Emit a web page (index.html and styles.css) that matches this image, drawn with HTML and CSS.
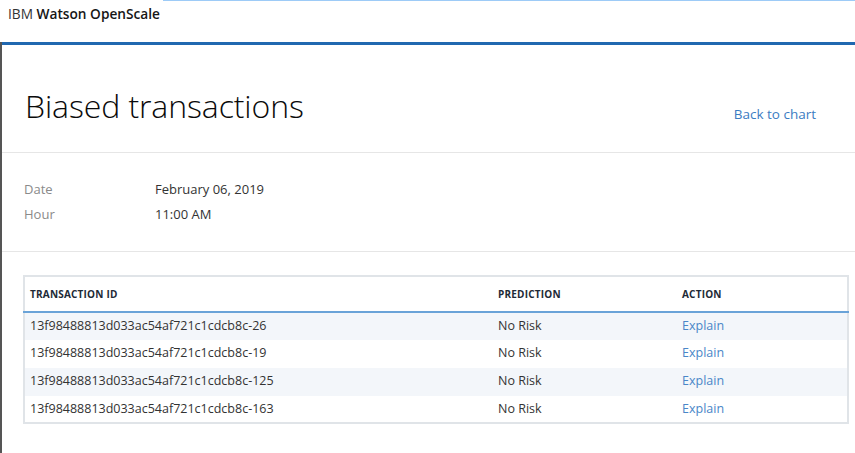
FILE: index.html
```html
<!DOCTYPE html>
<html>
<head>
<meta charset="utf-8">
<link rel="stylesheet" href="styles.css">
</head>
<body>
<div class="topline"></div>
<header class="masthead">
  <span class="brand"><span class="ibm">IBM</span> <strong>Watson OpenScale</strong></span>
</header>
<div class="frame">
  <div class="bluebar"></div>
  <section class="titlebar">
    <h1>Biased transactions</h1>
    <a class="back" href="#">Back to chart</a>
  </section>
  <section class="meta">
    <div class="meta-row"><span class="lbl">Date</span><span class="val">February 06, 2019</span></div>
    <div class="meta-row"><span class="lbl">Hour</span><span class="val">11:00 AM</span></div>
  </section>
  <section class="tablewrap">
    <table class="tx">
      <thead>
        <tr><th class="c1">TRANSACTION ID</th><th class="c2">PREDICTION</th><th class="c3">ACTION</th></tr>
      </thead>
      <tbody>
        <tr><td>13f98488813d033ac54af721c1cdcb8c-26</td><td>No Risk</td><td><a href="#">Explain</a></td></tr>
        <tr><td>13f98488813d033ac54af721c1cdcb8c-19</td><td>No Risk</td><td><a href="#">Explain</a></td></tr>
        <tr><td>13f98488813d033ac54af721c1cdcb8c-125</td><td>No Risk</td><td><a href="#">Explain</a></td></tr>
        <tr><td>13f98488813d033ac54af721c1cdcb8c-163</td><td>No Risk</td><td><a href="#">Explain</a></td></tr>
      </tbody>
    </table>
  </section>
</div>
</body>
</html>
```
FILE: styles.css
```css
html, body {
  margin: 0;
  padding: 0;
  background: #fff;
  font-family: "Open Sans", "Noto Sans", sans-serif;
  color: #222;
}
.topline {
  height: 1px;
  margin-left: 163px;
  background: #9dcbf7;
}
.masthead {
  height: 25px;
  padding-left: 8px;
  display: flex;
  align-items: center;
}
.brand {
  font-size: 13.7px;
  color: #161616;
  line-height: 1;
}
.ibm { font-weight: 400; color: #333; }
.brand strong { font-weight: 600; }
.frame {
  border-left: 2px solid #555;
  min-height: 427px;
}
.bluebar {
  height: 3px;
  margin-top: 16px;
  background: #2068b0;
}
.titlebar {
  display: flex;
  justify-content: space-between;
  align-items: flex-start;
  padding: 0 39px 0 23px;
  height: 107px;
  border-bottom: 1px solid #e6e6e6;
}
h1 {
  margin: 41px 0 0 0;
  font-size: 32px;
  font-weight: 300;
  line-height: 40px;
  color: #0a0a0a;
  letter-spacing: -0.1px;
}
.back {
  margin-top: 59px;
  font-size: 13.5px;
  color: #3b7cc2;
  text-decoration: none;
  line-height: 20px;
}
.meta {
  padding: 26px 0 26px 22px;
  border-bottom: 1px solid #e6e6e6;
  display: flex;
  flex-direction: column;
  gap: 5px;
  height: 46px;
}
.meta-row {
  display: flex;
  font-size: 13px;
  line-height: 20px;
}
.lbl { width: 131px; color: #8a8a8a; }
.val { color: #333; }
.tablewrap {
  padding: 23px 6px 0 21px;
}
.tx {
  width: 100%;
  border-collapse: collapse;
  border: 2px solid #e0e4e8;
}
.tx th {
  text-align: left;
  font-size: 10px;
  font-weight: 700;
  color: #1d2a36;
  height: 34px;
  padding: 0 0 0 5px;
  border-bottom: 2px solid #6aa3d8;
  letter-spacing: 0.2px;
}
.tx th.c1 { width: 463px; }
.tx th.c2 { width: 179px; }
.tx td {
  font-size: 12.5px;
  color: #333;
  height: 28px;
  padding: 0 0 3px 5px;
  box-sizing: border-box;
}
.tx tbody tr:nth-child(odd) td { background: #f3f6fa; }
.tx tbody tr:last-child td { height: 27px; padding-bottom: 2px; }
.tx td a { color: #4a86c8; text-decoration: none; }
```
